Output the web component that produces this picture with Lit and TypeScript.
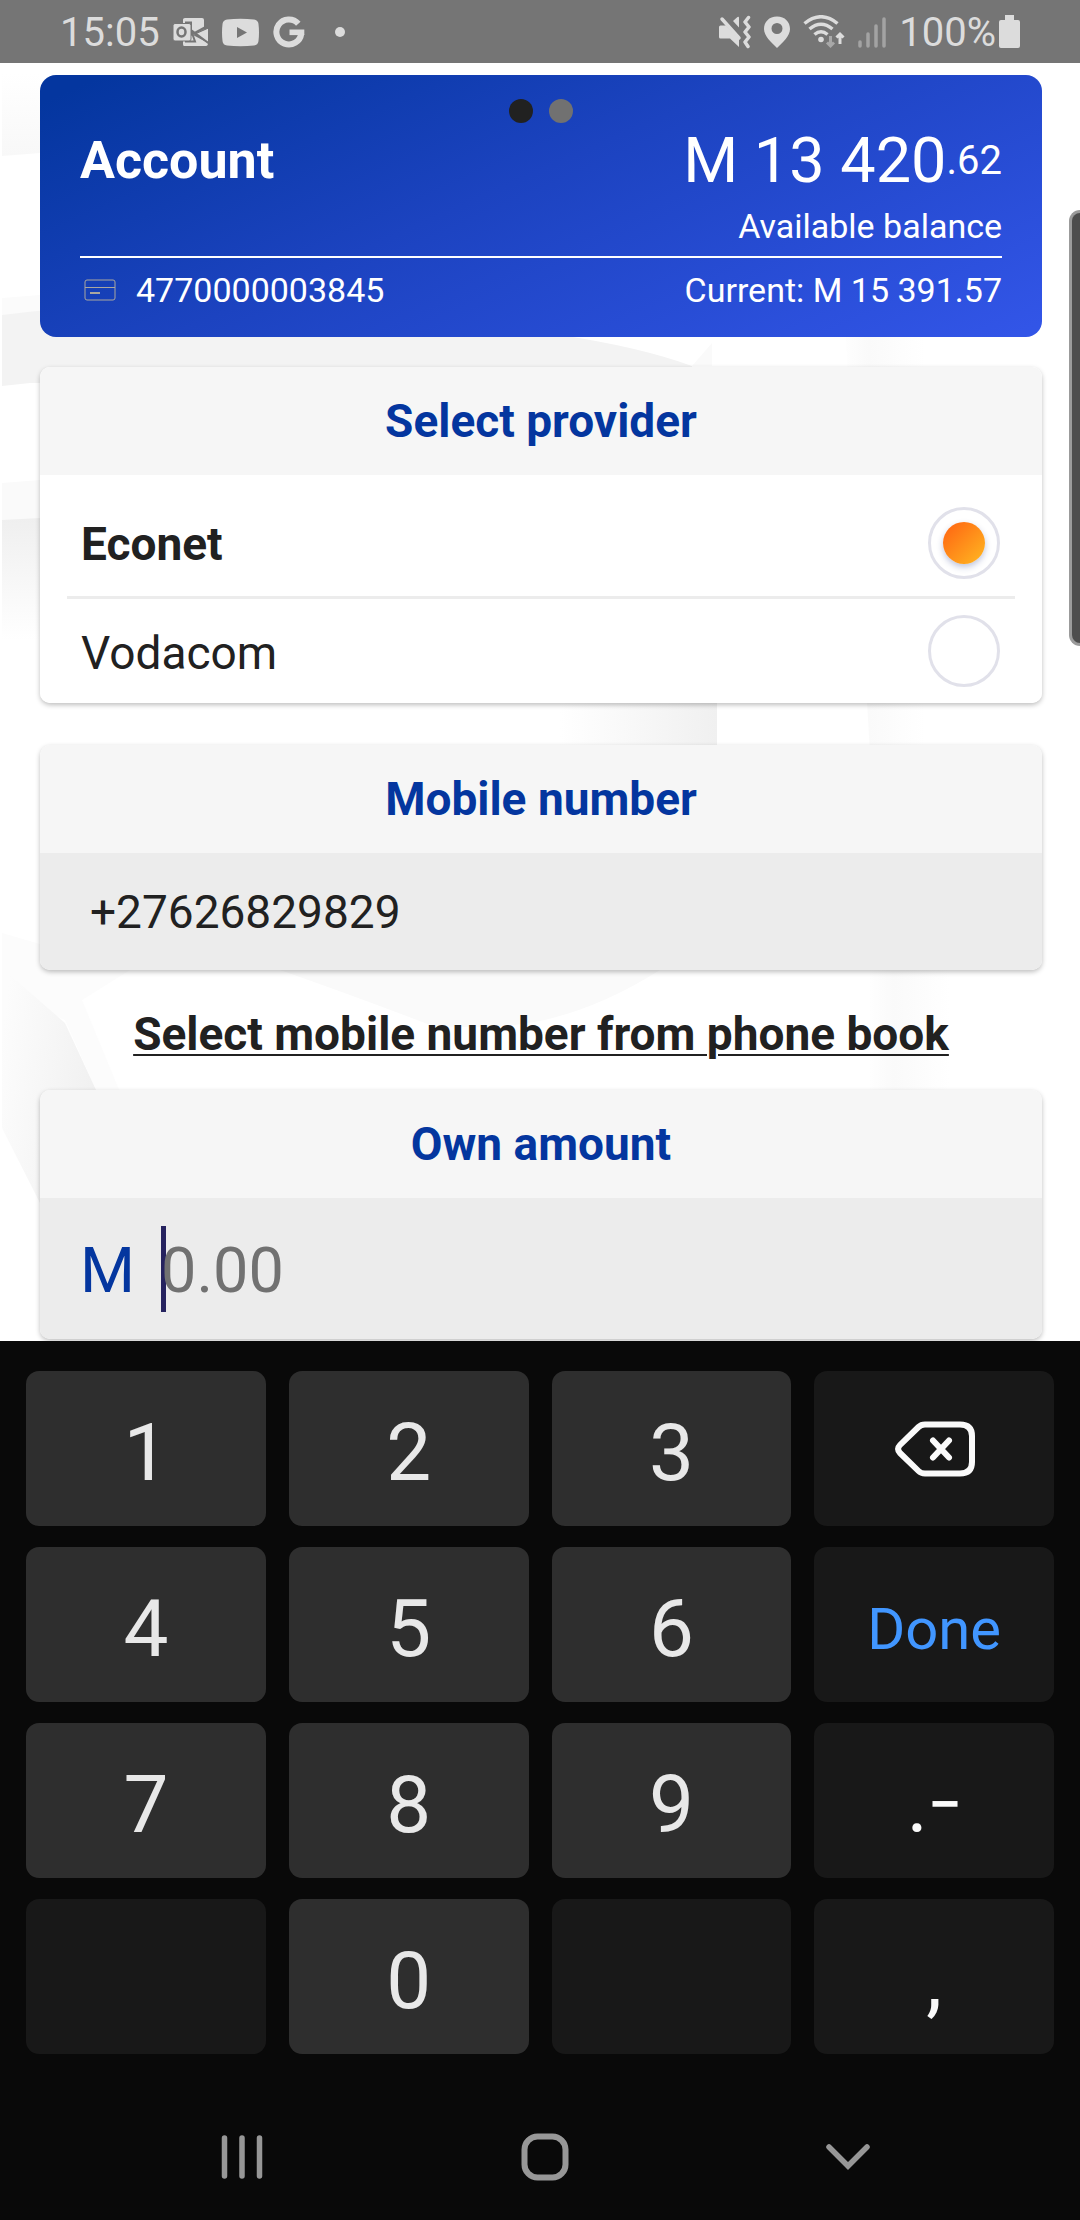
import { LitElement, html, css, svg } from "lit";
import { customElement, state } from "lit/decorators.js";

const baseFont = css`
  :host {
    font-family: Roboto, "Liberation Sans", sans-serif;
  }
  * {
    box-sizing: border-box;
  }
`;

@customElement("status-bar")
class StatusBar extends LitElement {
  static styles = [
    baseFont,
    css`
      :host {
        display: block;
        background: #757575;
        color: #dcdcdc;
      }
      .bar {
        display: flex;
        align-items: center;
        justify-content: space-between;
        height: 63px;
        padding: 0 60px;
        font-size: 40px;
        line-height: 60px;
      }
      .group {
        display: flex;
        align-items: center;
        gap: 13px;
      }
      .label {
        padding-top: 2px;
      }
      .battery {
        display: flex;
        align-items: center;
        gap: 3px;
      }
      .more {
        margin-left: 16px;
      }
      svg {
        display: block;
        flex: none;
      }
    `,
  ];

  render() {
    return html`
      <div class="bar">
        <div class="group">
          <span class="label">15:05</span>
          <svg width="36" height="34" viewBox="0 0 36 34" role="img" aria-label="Outlook">
            <path d="M10 4.500Q10 3 12 3H29Q31 3 31 5V14L20 20L35 28Q35 31 33 31H11Q10 31 10 29z" fill="#dcdcdc" />
            <path d="M22 19L35.500 13V28z" fill="#dcdcdc" stroke="#757575" stroke-width="1" />
            <path d="M12 26.500H22L18 15L36 28.500M18 20L34.500 11M12 7.500H18V20" fill="none" stroke="#757575" stroke-width="2" />
            <rect x="0" y="8.500" width="18" height="17.500" rx="2" fill="#dcdcdc" stroke="#757575" stroke-width="1" />
            <ellipse cx="8.500" cy="17" rx="4" ry="4.500" fill="none" stroke="#757575" stroke-width="2.500" />
          </svg>
          <svg width="37" height="34" viewBox="0 0 37 34" role="img" aria-label="YouTube">
            <path d="M5 4.500Q18.500 3 32 4.500Q36 5 36.500 9Q37.500 17 36.500 26Q36 30 32 30.500Q18.500 32 5 30.500Q1 30 .5 26Q-.5 17 .5 9Q1 5 5 4.500z" fill="#dcdcdc" />
            <path d="M15 12v11l10-5.500z" fill="#757575" />
          </svg>
          <svg width="34" height="34" viewBox="0 0 34 34" role="img" aria-label="Google">
            <path d="M26.300 8.700A12.500 12.500 0 1 0 29.300 18.500" fill="none" stroke="#dcdcdc" stroke-width="6" />
            <path d="M17.500 17.300H32.300" stroke="#dcdcdc" stroke-width="5.600" />
          </svg>
          <svg class="more" width="10" height="10" viewBox="0 0 10 10" aria-hidden="true">
            <circle cx="5" cy="5" r="5" fill="#dcdcdc" />
          </svg>
        </div>
        <div class="group">
          <svg width="32" height="34" viewBox="0 0 32 34" role="img" aria-label="Vibrate">
            <path d="M1.500 10.500H7L20 24V32L11 23.500H1.500Q0 23.500 0 22V12Q0 10.500 1.500 10.500zM14 6L18.500 2Q20 1 20 3V12.500z" fill="#dcdcdc" />
            <path d="M3 4L20 23" stroke="#dcdcdc" stroke-width="3.500" stroke-linecap="round" />
            <path d="M29.500 2.500L26 7L30 12L26 17L30 22L26 27L29 31.500" fill="none" stroke="#dcdcdc" stroke-width="3.500" stroke-linejoin="round" stroke-linecap="round" />
          </svg>
          <svg width="26" height="34" viewBox="0 0 26 34" role="img" aria-label="Location">
            <path fill-rule="evenodd" d="M13 1.500C5 1.500 0 7 0 14C0 21 7 27 13 33C19 27 26 21 26 14C26 7 21 1.500 13 1.500zM13 8a5.500 5.500 0 1 1 0 11a5.500 5.500 0 1 1 0-11z" fill="#dcdcdc" />
          </svg>
          <svg width="42" height="34" viewBox="0 0 42 34" role="img" aria-label="Wi-Fi">
            <path d="M1.500 8.500Q18-5 34.500 8.500M6.500 14Q18 4.500 29.500 14M11.500 19.500Q18 14 24.500 19.500" fill="none" stroke="#dcdcdc" stroke-width="3.500" />
            <circle cx="18" cy="24.500" r="2.800" fill="#dcdcdc" />
            <path d="M27.500 21v10M24 27.500l3.500 3.500 3.500-3.500" fill="none" stroke="#a8a8a8" stroke-width="3" />
            <path d="M37 29V19M33.500 22.500L37 19l3.500 3.500" fill="none" stroke="#dcdcdc" stroke-width="3" />
          </svg>
          <svg width="28" height="34" viewBox="0 0 28 34" role="img" aria-label="Signal">
            <path d="M2 27v4M10 19v12M18 11v20M26 4v27" stroke="#a3a3a3" stroke-width="3.500" stroke-linecap="round" />
          </svg>
          <div class="battery">
            <span class="label">100%</span>
            <svg width="21" height="34" viewBox="0 0 21 34" role="img" aria-label="Battery full">
              <path d="M6 0h9v5h4q2 0 2 2v24q0 2-2 2H2q-2 0-2-2V7q0-2 2-2h4z" fill="#dcdcdc" />
            </svg>
          </div>
        </div>
      </div>
    `;
  }
}

@customElement("account-card")
class AccountCard extends LitElement {
  static styles = [
    baseFont,
    css`
      :host {
        display: block;
        color: #fff;
      }
      .card {
        display: flex;
        flex-direction: column;
        height: 262px;
        padding: 24px 40px 0;
        border-radius: 16px;
        background: linear-gradient(156deg, #04369f 4%, #1c43c0 45%, #3255e7 98%);
      }
      .dots {
        display: flex;
        justify-content: center;
        gap: 16px;
      }
      .dot {
        width: 24px;
        height: 24px;
        border: 0;
        padding: 0;
        border-radius: 50%;
        background: #717171;
      }
      .dot.current {
        background: #212121;
      }
      .main {
        display: flex;
        justify-content: space-between;
        align-items: center;
        height: 76px;
      }
      .name {
        margin: 0;
        font-size: 52px;
        line-height: 76px;
        font-weight: 700;
      }
      .amount {
        display: flex;
        align-items: center;
        font-size: 63px;
        line-height: 78px;
      }
      .cents {
        font-size: 40px;
      }
      .caption {
        height: 59px;
        border-bottom: 2px solid #fff;
        text-align: right;
        font-size: 34px;
        line-height: 54px;
      }
      .details {
        display: flex;
        align-items: center;
        justify-content: space-between;
        height: 64px;
        font-size: 34px;
      }
      .number {
        display: flex;
        align-items: center;
        gap: 20px;
        padding-left: 4px;
      }
    `,
  ];

  render() {
    return html`
      <section class="card" aria-label="Account">
        <div class="dots">
          <button class="dot current" aria-label="Account 1"></button>
          <button class="dot" aria-label="Account 2"></button>
        </div>
        <div class="main">
          <h1 class="name">Account</h1>
          <div class="amount"><span>M 13 420</span><span class="cents">.62</span></div>
        </div>
        <div class="caption">Available balance</div>
        <div class="details">
          <span class="number">
            <svg width="32" height="22" viewBox="0 0 32 22" aria-hidden="true">
              <rect x="1" y="1" width="30" height="20" rx="2" fill="none" stroke="#aaa79f" />
              <path d="M1 8.500H31" stroke="#aaa79f" />
              <path d="M6 14H16" stroke="#aaa79f" stroke-width="2" />
            </svg>
            <span>4770000003845</span>
          </span>
          <span>Current: M 15 391.57</span>
        </div>
      </section>
    `;
  }
}

@customElement("number-pad")
class NumberPad extends LitElement {
  static styles = [
    baseFont,
    css`
      :host {
        display: block;
      }
      .pad {
        display: grid;
        grid-template-columns: repeat(4, 1fr);
        grid-auto-rows: 155px;
        gap: 21px 23px;
        padding: 30px 26px 0;
      }
      .key {
        display: flex;
        align-items: center;
        justify-content: center;
        border: 0;
        border-radius: 13px;
        padding: 8px 0 0;
        background: #2e2e2e;
        color: #e8e8e8;
        font: 400 80px/96px Roboto, "Liberation Sans", sans-serif;
      }
      .key.side {
        background: #181818;
        color: #fafafa;
      }
      .key.done {
        color: #4196ff;
        font-size: 58px;
      }
      .key.icon {
        padding: 0 0 0 2px;
      }
      .dash {
        font-size: 60px;
        font-weight: 500;
      }
    `,
  ];

  render() {
    const digit = (d: string) => html`<button class="key">${d}</button>`;
    return html`
      <div class="pad">
        ${["1", "2", "3"].map(digit)}
        <button class="key side icon" aria-label="Backspace">
          <svg width="82" height="58" viewBox="0 0 82 58" fill="none" stroke="#fafafa" stroke-linecap="round" stroke-linejoin="round">
            <path d="M31 4.500H66Q78 4.500 78 16V42Q78 53.500 66 53.500H31Q27 53.500 24.500 51L6 33Q2 29 6 25L24.500 7Q27 4.500 31 4.500z" stroke-width="6" />
            <path d="M39 20.500L55 37.500M55 20.500L39 37.500" stroke-width="6" />
          </svg>
        </button>
        ${["4", "5", "6"].map(digit)}
        <button class="key side done">Done</button>
        ${["7", "8", "9"].map(digit)}
        <button class="key side"><span>.</span><span class="dash">−</span></button>
        <button class="key side" aria-label="Blank"></button>
        ${digit("0")}
        <button class="key side" aria-label="Blank"></button>
        <button class="key side">,</button>
      </div>
    `;
  }
}

@customElement("nav-bar")
class NavBar extends LitElement {
  static styles = css`
    :host {
      display: block;
    }
    .nav {
      display: flex;
      justify-content: space-around;
      align-items: center;
      height: 126px;
      padding: 0 81px 0 91px;
    }
    .item {
      display: flex;
      border: 0;
      padding: 0;
      background: none;
    }
  `;

  render() {
    return html`
      <nav class="nav">
        <button class="item" aria-label="Recent apps">
          <svg width="48" height="48" viewBox="0 0 48 48" stroke="#979797" stroke-width="5.500" stroke-linecap="round">
            <path d="M6.500 5V43M24 5V43M41.500 5V43" />
          </svg>
        </button>
        <button class="item" aria-label="Home">
          <svg width="48" height="48" viewBox="0 0 48 48" fill="none" stroke="#979797" stroke-width="6">
            <rect x="3.500" y="3.500" width="41" height="41" rx="13" />
          </svg>
        </button>
        <button class="item" aria-label="Hide keyboard">
          <svg width="48" height="48" viewBox="0 0 48 48" fill="none" stroke="#979797" stroke-width="5.500" stroke-linecap="round">
            <path d="M5 14L24 33L43 14" />
          </svg>
        </button>
      </nav>
    `;
  }
}

@customElement("app-root")
class AppRoot extends LitElement {
  @state() private provider = "Econet";

  static styles = [
    baseFont,
    css`
      :host {
        display: flex;
        flex-direction: column;
        min-height: 100vh;
        background: #090909;
        color: #212121;
      }
      .screen {
        position: relative;
        overflow: hidden;
        height: 1278px;
        padding: 12px 38px 0 40px;
        background: #fff;
      }
      .backdrop {
        position: absolute;
        inset: 0;
        width: 100%;
        height: 100%;
      }
      .edge {
        position: absolute;
        right: 0;
        top: 147px;
        width: 11px;
        height: 436px;
        border: 3px solid #9b9b9b;
        border-right: 0;
        border-radius: 11px 0 0 11px;
        background: #4d4d4d;
      }
      .content {
        position: relative;
        display: flex;
        flex-direction: column;
      }
      .panel {
        margin: 0;
        padding: 0;
        border: 0;
        border-radius: 10px;
        overflow: hidden;
        background: #fff;
        box-shadow: 0 2px 5px rgba(0, 0, 0, 0.26);
      }
      .providers {
        margin-top: 30px;
        min-width: 0;
      }
      .mobile {
        margin-top: 42px;
      }
      .own {
        margin-top: 17px;
      }
      .title {
        display: block;
        width: 100%;
        margin: 0;
        padding: 0;
        background: #f6f6f6;
        color: #04369f;
        text-align: center;
        font-size: 46px;
        line-height: 108px;
        font-weight: 700;
      }
      .options {
        padding: 14px 27px 0;
      }
      .option {
        display: flex;
        align-items: center;
        justify-content: space-between;
        height: 107px;
        padding: 0 15px 0 14px;
        font-size: 46px;
      }
      .option + .option {
        border-top: 3px solid #ececec;
      }
      .option.chosen {
        font-weight: 700;
      }
      .option-name {
        padding-top: 3px;
      }
      .radio {
        appearance: none;
        display: grid;
        place-items: center;
        width: 72px;
        height: 72px;
        margin: 0;
        border: 3px solid #e1e1ea;
        border-radius: 50%;
        background: #fff;
      }
      .radio:checked::before {
        content: "";
        width: 42px;
        height: 42px;
        border-radius: 50%;
        background: linear-gradient(135deg, #ff6a13 10%, #ffb020 90%);
        box-shadow: 0 3px 6px rgba(40, 60, 140, 0.3);
      }
      .field {
        display: flex;
        align-items: center;
        background: #ececec;
        padding: 0 40px;
      }
      .input {
        flex: 1;
        min-width: 0;
        border: 0;
        outline: 0;
        background: none;
        color: #212121;
        caret-color: transparent;
        font-family: inherit;
      }
      .phone {
        height: 117px;
        padding: 0 10px;
        font-size: 46px;
      }
      .currency {
        width: 81px;
        padding-top: 3px;
        color: #04369f;
        font-size: 63px;
      }
      .caret {
        width: 5px;
        height: 86px;
        margin-right: -5px;
        background: #26235f;
      }
      .amount {
        height: 141px;
        padding: 4px 0 0;
        font-size: 63px;
      }
      .amount::placeholder {
        color: #717171;
        opacity: 1;
      }
      .link {
        align-self: center;
        margin-top: 25px;
        color: #212121;
        font-size: 46px;
        line-height: 78px;
        font-weight: 700;
        text-decoration-thickness: 2px;
        text-underline-offset: 4px;
      }
      .keyboard {
        display: flex;
        flex: 1;
        flex-direction: column;
        justify-content: space-between;
        background: #090909;
      }
    `,
  ];

  private renderOption(name: string) {
    const chosen = this.provider === name;
    return html`
      <label class="option ${chosen ? "chosen" : ""}">
        <span class="option-name">${name}</span>
        <input
          class="radio"
          type="radio"
          name="provider"
          .checked=${chosen}
          @change=${() => (this.provider = name)}
        />
      </label>
    `;
  }

  private renderBackdrop() {
    return svg`
      <svg class="backdrop" viewBox="0 0 1080 1278" preserveAspectRatio="none" aria-hidden="true">
        <defs>
          <linearGradient id="down" x1="0" y1="0" x2="0" y2="1">
            <stop offset="0" stop-color="#fff" />
            <stop offset="1" stop-color="#f8f8f8" />
          </linearGradient>
          <linearGradient id="fade" x1="0" y1="0" x2="0" y2="1">
            <stop offset="0" stop-color="#efefef" />
            <stop offset="1" stop-color="#fff" />
          </linearGradient>
          <linearGradient id="right" x1="0" y1="0" x2="1" y2="0">
            <stop offset="0" stop-color="#fff" />
            <stop offset="1" stop-color="#f0f0f0" />
          </linearGradient>
          <linearGradient id="band" x1="0" y1="0" x2="1" y2="0">
            <stop offset="0" stop-color="#fefefe" />
            <stop offset="0.3" stop-color="#fafafa" />
            <stop offset="1" stop-color="#fff" />
          </linearGradient>
          <linearGradient id="slant" x1="0" y1="0.3" x2="1" y2="0.6">
            <stop offset="0" stop-color="#fcfcfc" />
            <stop offset="1" stop-color="#f0f0f0" />
          </linearGradient>
        </defs>
        <path d="M2 10H40V90L2 93z" fill="url(#down)" />
        <path d="M2 235L40 232V255L2 258z" fill="#fbfbfb" />
        <path d="M2 252Q300 215 560 272Q640 284 692 303V320H30L2 323z" fill="#f3f3f3" />
        <path d="M692 303L712 280V303z" fill="#fafafa" />
        <path d="M845 260H925V690H870z" fill="url(#band)" />
        <path d="M2 420L40 417V460H2z" fill="#fafafa" />
        <path d="M2 457L40 455V577H2z" fill="url(#fade)" />
        <path d="M560 640H717V690H560z" fill="url(#right)" />
        <path d="M280 907H660Q600 945 540 958Q490 968 430 962Q360 935 280 907z" fill="#fafafa" />
        <path d="M870 907H950V1030H870z" fill="url(#band)" />
        <path d="M2 870L130 907L82 937L120 1029H97L65 957L2 930z" fill="#fcfcfc" />
        <path d="M2 905L65 960L97 1029L40 1140L2 1065z" fill="url(#slant)" />
      </svg>
    `;
  }

  render() {
    return html`
      <status-bar></status-bar>
      <main class="screen">
        ${this.renderBackdrop()}
        <div class="content">
          <account-card></account-card>
          <fieldset class="panel providers" aria-labelledby="provider-title">
            <h2 class="title" id="provider-title">Select provider</h2>
            <div class="options">${["Econet", "Vodacom"].map((name) => this.renderOption(name))}</div>
          </fieldset>
          <section class="panel mobile">
            <label class="title" for="phone">Mobile number</label>
            <div class="field">
              <input class="input phone" id="phone" type="tel" value="+27626829829" />
            </div>
          </section>
          <a class="link" href="#phone-book">Select mobile number from phone book</a>
          <section class="panel own">
            <label class="title" for="amount">Own amount</label>
            <div class="field">
              <span class="currency">M</span>
              <span class="caret"></span>
              <input class="input amount" id="amount" inputmode="decimal" placeholder="0.00" />
            </div>
          </section>
        </div>
        <div class="edge"></div>
      </main>
      <div class="keyboard">
        <number-pad></number-pad>
        <nav-bar></nav-bar>
      </div>
    `;
  }
}
